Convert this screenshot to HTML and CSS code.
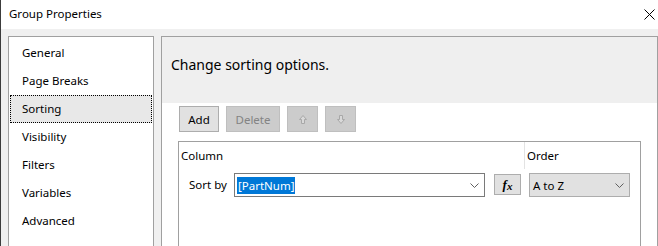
FILE: index.html
```html
<!DOCTYPE html>
<html>
<head>
<meta charset="utf-8">
<link rel="stylesheet" href="styles.css">
</head>
<body>
<div class="window">
  <div class="titlebar">
    <span class="title">Group Properties</span>
    <svg class="close" width="11" height="11" viewBox="0 0 11 11"><path d="M0.5 0.5L10.5 10.5M10.5 0.5L0.5 10.5" stroke="#000" stroke-width="1"/></svg>
  </div>
  <div class="main">
    <ul class="nav">
      <li>General</li>
      <li>Page Breaks</li>
      <li class="selected">Sorting</li>
      <li>Visibility</li>
      <li>Filters</li>
      <li>Variables</li>
      <li>Advanced</li>
    </ul>
    <div class="content">
      <div class="header">Change sorting options.</div>
      <div class="body">
        <div class="toolbar">
          <button class="btn add">Add</button>
          <button class="btn disabled delete">Delete</button>
          <button class="btn disabled arrow"><svg width="8" height="9" viewBox="0 0 8 9"><path d="M4 0.5L7.5 4.5H5.5V8.5H2.5V4.5H0.5Z" fill="#d9d9d9" stroke="#a8a8a8" stroke-width="1"/></svg></button>
          <button class="btn disabled arrow"><svg width="8" height="9" viewBox="0 0 8 9"><path d="M4 8.5L7.5 4.5H5.5V0.5H2.5V4.5H0.5Z" fill="#d9d9d9" stroke="#a8a8a8" stroke-width="1"/></svg></button>
        </div>
        <div class="grid">
          <div class="grid-head">
            <div class="col-column">Column</div>
            <div class="col-order">Order</div>
          </div>
          <div class="grid-row">
            <span class="sortby">Sort by</span>
            <div class="combo">
              <span class="sel">[PartNum]</span>
              <svg class="chev" width="9" height="5" viewBox="0 0 9 5"><path d="M0.5 0.5L4.5 4.5L8.5 0.5" fill="none" stroke="#606060" stroke-width="1"/></svg>
            </div>
            <button class="fx"><i>f</i><span>x</span></button>
            <div class="order">
              <span>A to Z</span>
              <svg class="chev" width="9" height="5" viewBox="0 0 9 5"><path d="M0.5 0.5L4.5 4.5L8.5 0.5" fill="none" stroke="#606060" stroke-width="1"/></svg>
            </div>
          </div>
        </div>
      </div>
    </div>
  </div>
</div>
</body>
</html>
```
FILE: styles.css
```css
* { box-sizing: border-box; }
html, body { margin: 0; padding: 0; }
body {
  width: 658px;
  height: 246px;
  overflow: hidden;
  background: #f0f0f0;
  font-family: "Noto Sans", "Open Sans", sans-serif;
  font-size: 11.5px;
  color: #000;
}
.window {
  width: 658px;
  height: 246px;
  display: flex;
  flex-direction: column;
  border-left: 1px solid #3c3c3c;
}
.titlebar {
  height: 29px;
  background: #fff;
  display: flex;
  align-items: center;
  justify-content: space-between;
  padding: 0 3px 1px 8px;
  flex: none;
}
.title { font-size: 11.5px; line-height: 16px; }
.main {
  flex: 1;
  display: flex;
  padding: 7px 0 0 7px;
  gap: 7px;
  min-height: 0;
}
.nav {
  list-style: none;
  margin: 0;
  padding: 2px 0 0 1px;
  width: 146px;
  background: #fff;
  border: 1px solid #a0a0a0;
  border-bottom: none;
}
.nav li {
  height: 28px;
  line-height: 25px;
  padding: 0 0 0 11px;
  border: 1px solid transparent;
  margin-right: 1px;
}
.nav li.selected {
  background: #e8e8e8;
  border: 1px dotted #000;
}
.content {
  flex: 1;
  background: #fff;
  border: 1px solid #a0a0a0;
  border-bottom: none;
  display: flex;
  flex-direction: column;
  min-height: 0;
}
.header {
  height: 66px;
  background: #efefef;
  font-size: 14px;
  padding: 18px 0 0 9px;
  line-height: 20px;
  flex: none;
}
.body {
  flex: 1;
  min-height: 0;
  padding: 3px 16px 0 16px;
  display: flex;
  flex-direction: column;
}
.toolbar {
  display: flex;
  gap: 7px;
  height: 26px;
  margin-left: 1px;
  flex: none;
}
.btn {
  font-family: inherit;
  font-size: 11.5px;
  height: 26px;
  margin: 0;
  padding: 0;
  border: 1px solid #adadad;
  background: #e1e1e1;
  color: #000;
  display: flex;
  align-items: center;
  justify-content: center;
}
.btn.add { width: 40px; }
.btn.disabled {
  background: #cccccc;
  border-color: #bfbfbf;
  color: #838383;
}
.btn.delete { width: 54px; }
.btn.arrow { width: 31px; }
.grid {
  margin-top: 9px;
  flex: 1;
  min-height: 0;
  border: 1px solid #a0a0a0;
  border-bottom: none;
  width: 463px;
}
.grid-head {
  display: flex;
  height: 27px;
}
.col-column {
  width: 346px;
  padding: 6px 0 0 2px;
  border-right: 1px solid #e3e3e3;
}
.col-order { padding: 6px 0 0 2px; }
.grid-row {
  display: flex;
  align-items: flex-start;
  padding: 4px 0 0 10px;
}
.sortby { width: 45px; line-height: 24px; }
.combo {
  width: 251px;
  height: 24px;
  border: 1px solid #7a7a7a;
  background: #fff;
  display: flex;
  align-items: center;
  justify-content: space-between;
  padding: 0 5px 0 2px;
}
.sel {
  background: #0078d7;
  color: #fff;
  line-height: 17px;
  padding: 0 1px;
}
.fx {
  margin: 1px 0 0 9px;
  width: 27px;
  height: 21px;
  border: 1px solid #adadad;
  background: #e1e1e1;
  padding: 0;
  font-family: "Liberation Serif", serif;
  font-weight: bold;
  font-size: 13px;
  display: flex;
  align-items: center;
  justify-content: center;
}
.fx i { font-style: italic; }
.fx span { font-size: 11px; font-style: italic; margin-top: 2px; }
.order {
  margin-left: 8px;
  width: 101px;
  height: 24px;
  border: 1px solid #adadad;
  background: #e1e1e1;
  display: flex;
  align-items: center;
  justify-content: space-between;
  padding: 0 5px 0 3px;
}
```
